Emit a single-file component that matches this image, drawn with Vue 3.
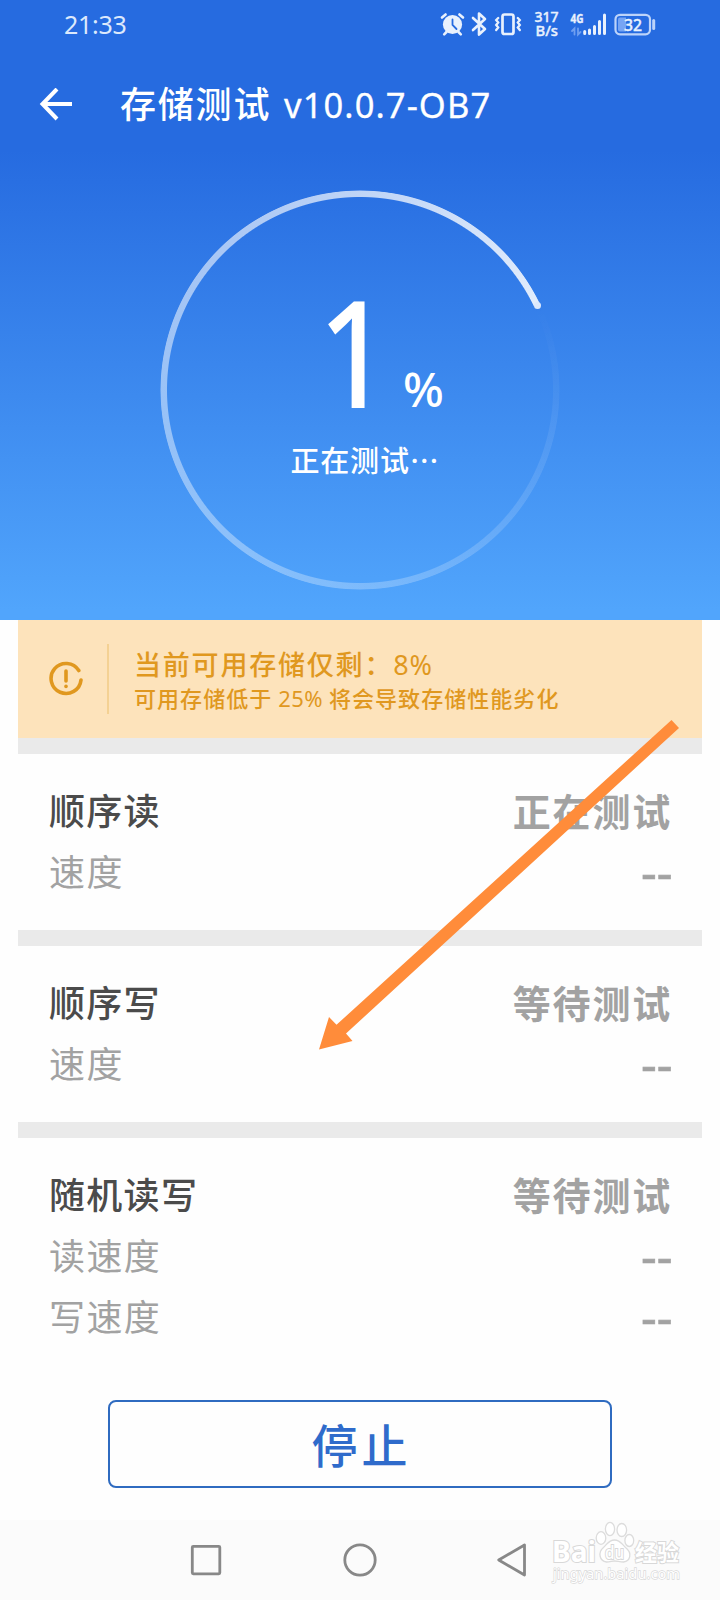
<script setup>
const sections = [
  { title: '顺序读', status: '正在测试', rows: ['速度'] },
  { title: '顺序写', status: '等待测试', rows: ['速度'] },
  { title: '随机读写', status: '等待测试', rows: ['读速度', '写速度'] },
]
</script>

<template>
  <div class="screen">
    <header class="hero">
      <div class="statusbar">
        <span class="time">21:33</span>
        <svg class="tray" width="224" height="50" viewBox="436 0 224 50">
          <g fill="none" stroke="#e9f1fd" stroke-width="2.4" stroke-linecap="round">
            <circle cx="452.5" cy="24.5" r="9.6" fill="#e9f1fd" stroke="none" />
            <path d="M442 17.5l3.6-3M463 17.5l-3.6-3M446.5 32l-2.3 2.4M458.5 32l2.3 2.4" stroke-width="2.6" />
            <path d="M452.5 19.5v5.5l4 4" stroke="#266be0" stroke-width="1.8" />
            <path d="M473 18l12 11-6 5.500v-21l6 5.500L473 30" stroke-width="2.6" stroke-linejoin="round" />
            <rect x="502.5" y="14.500" width="11" height="19.500" rx="2" stroke-width="2.700" />
            <path d="M498.200 18l-2 2 2 2.500-2 2.500 2 2.500-2 2.500M517.800 18l2 2-2 2.500 2 2.500-2 2.500 2 2.500" stroke-width="2.300" />
            <path d="M584.700 31.500v2M589.500 30v3.500M594.500 26.500v7M599.500 21.500v12M604.500 15v18.500" stroke-width="3" />
            <path d="M574.500 34.500v-6l-2.500 2.500M578 28.500v6l2.500-2.500" stroke="#6f9ff0" stroke-width="1.800" />
            <rect x="615.500" y="14.800" width="34.500" height="19.500" rx="4.500" stroke="#bcd3fa" stroke-width="2.200" />
            <path d="M653.700 20.500v8" stroke="#bcd3fa" stroke-width="3" />
          </g>
          <path d="M626 17.500h-6a2 2 0 0 0-2 2v10a2 2 0 0 0 2 2h6z" fill="#77a5f4" />
          <g fill="#e9f1fd" stroke="#e9f1fd" stroke-width=".4" font-weight="500">
            <text x="534.500" y="22" font-size="14.500" textLength="24" lengthAdjust="spacingAndGlyphs">317</text>
            <text x="535.500" y="36" font-size="14.500" textLength="22.500" lengthAdjust="spacingAndGlyphs">B/s</text>
            <text x="570.500" y="23" font-size="13" font-weight="700" textLength="13" lengthAdjust="spacingAndGlyphs">4G</text>
            <text x="624" y="30.500" font-size="16.500" textLength="18" lengthAdjust="spacingAndGlyphs">32</text>
          </g>
        </svg>
      </div>

      <div class="titlebar">
        <svg width="34" height="34" viewBox="0 0 34 34" fill="none" stroke="#fff" stroke-width="4">
          <path d="M18 1L3.500 16 18 31M3.500 16H33" />
        </svg>
        <h1><span class="name">存储测试</span><span class="ver">v10.0.7-OB7</span></h1>
      </div>

      <div class="dial">
        <div class="ring"></div>
        <i class="cap"></i>
        <div class="percent"><span class="num">1</span><span class="unit">%</span></div>
        <p>正在测试<span>⋯</span></p>
      </div>
    </header>

    <main>
      <section class="notice">
        <svg width="36" height="36" viewBox="0 0 36 36" fill="none" stroke="#e0981f" stroke-width="3.600" stroke-linecap="round">
          <path d="M30.800 9.500A15 15 0 1 0 33 19" />
          <path d="M18 10v10" />
          <path d="M18 25.200v.2" />
        </svg>
        <i class="rule"></i>
        <div class="msg">
          <strong>当前可用存储仅剩：<b>8%</b></strong>
          <span>可用存储低于<em>25%</em>将会导致存储性能劣化</span>
        </div>
      </section>

      <section v-for="s in sections" :key="s.title" class="test">
        <div class="head"><h2>{{ s.title }}</h2><span>{{ s.status }}</span></div>
        <div v-for="r in s.rows" :key="r" class="row"><span>{{ r }}</span><b>--</b></div>
      </section>
    </main>

    <button class="stop">停止</button>

    <nav>
      <svg width="720" height="80" viewBox="0 1520 720 80">
        <g fill="none" stroke="#888" stroke-width="2.800" stroke-linejoin="round">
          <rect x="192.300" y="1546.300" width="27.500" height="27.500" rx="1" />
          <circle cx="360" cy="1560" r="15.200" />
          <path d="M524.500 1545v30L498.700 1560z" />
        </g>
      </svg>
    </nav>

    <svg class="watermark" width="136" height="66" viewBox="548 1518 136 66">
      <g fill="#fff" stroke="#dcdcdc" stroke-width="1.300">
        <ellipse cx="601" cy="1538" rx="4.800" ry="6.300" />
        <ellipse cx="610" cy="1529" rx="4.600" ry="6.600" />
        <ellipse cx="621.800" cy="1530" rx="4.800" ry="6.500" />
        <ellipse cx="629.300" cy="1540.500" rx="4.400" ry="6" />
        <path d="M614.500 1540c-6 0-7 4-11 7.500-6 5-4 13.500 3 14.500 4 0 5-1 8-1s5 1 9 1c7-1 9-9 2-14.500-4-3.500-5-7.500-11-7.500z" />
      </g>
      <g fill="#fff" stroke="#d8d8d8" stroke-width="2" paint-order="stroke" font-weight="700">
        <text x="552" y="1562" font-size="28" textLength="44" lengthAdjust="spacingAndGlyphs">Bai</text>
        <text x="605" y="1558.500" font-size="18" font-weight="500" textLength="19" lengthAdjust="spacingAndGlyphs">du</text>
        <text x="635" y="1561" font-size="23" textLength="44" lengthAdjust="spacingAndGlyphs">经验</text>
        <text x="553" y="1579" font-size="15" font-weight="400" stroke-width="1.300" textLength="127" lengthAdjust="spacingAndGlyphs">jingyan.baidu.com</text>
      </g>
    </svg>

    <svg class="arrow" width="362" height="332" viewBox="318 719 362 332">
      <path d="M319 1049.500L329 1017l7.500 7.800L671.500 720l7.500 8L346 1033.500l6.500 7.500z" fill="#ff8c3a" />
    </svg>
  </div>
</template>

<style>
body { margin: 0; background: #fefefe; }
</style>

<style scoped>
.screen {
  position: relative; width: 720px; height: 1600px; overflow: hidden;
  display: flex; flex-direction: column; background: #fefefe;
  font-family: "Noto Sans", "Noto Sans CJK SC", sans-serif;
}
.screen * { box-sizing: border-box; }
h1, h2, p { margin: 0; font-weight: 400; }
i, em { font-style: normal; }
.hero {
  height: 620px; flex: none; color: #fff;
  background: linear-gradient(180deg, #266be0 0, #266be0 150px, #51a5fc 610px);
}
.statusbar { height: 50px; display: flex; justify-content: space-between; padding: 0 60px 0 64px; }
.time { font-size: 25px; line-height: 49px; color: #dce9fc; letter-spacing: -.3px; }
.titlebar { height: 110px; padding: 0 39px; display: flex; align-items: center; gap: 47px; }
h1 { display: flex; align-items: center; line-height: 50px; }
.name { font-size: 36px; letter-spacing: 1.8px; font-weight: 500; width: 164px; }
.ver { font-size: 34.5px; letter-spacing: 1.1px; white-space: nowrap; -webkit-text-stroke: .3px #fff; }
.dial {
  position: relative; width: 400px; height: 400px; margin: 30px auto 0;
  display: flex; flex-direction: column; align-items: center;
}
.ring {
  position: absolute; inset: 0; border-radius: 50%;
  background: conic-gradient(from 64.4deg, rgba(255,255,255,0), rgba(255,255,255,.06) 8%, rgba(255,255,255,.86) 100%);
  mask: radial-gradient(circle, transparent 192.5px, #000 193.5px, #000 199px, transparent 200px);
}
.cap { position: absolute; left: 373.5px; top: 111.5px; width: 7px; height: 7px; border-radius: 50%; background: #dbe8fc; }
.percent { width: 400px; height: 246px; padding-left: 158px; display: flex; align-items: flex-start; }
.num {
  font-size: 146px; line-height: 322px; height: 246px; width: 85px;
  transform: scaleX(.88); transform-origin: 0 0; -webkit-text-stroke: 2px #fff;
}
.unit { font-size: 48px; font-weight: 500; line-height: 398px; height: 246px; }
.dial p { font-size: 29px; font-weight: 500; line-height: 50px; letter-spacing: .8px; padding-left: 10px; }
main { padding: 0 18px; }
.notice { height: 118px; background: #fde3bb; color: #e0981f; display: flex; align-items: center; padding-left: 30px; }
.rule { width: 2px; height: 70px; background: #f4d193; margin: 0 25px 0 23px; }
.msg { display: flex; flex-direction: column; white-space: nowrap; padding-top: 3px; }
.msg strong { font-size: 27px; line-height: 35px; font-weight: 500; letter-spacing: 1.8px; display: flex; }
.msg b { font-weight: 400; letter-spacing: .8px; }
.msg > span { font-size: 22px; line-height: 33px; font-weight: 500; letter-spacing: 1.05px; }
.msg em { margin: 0 6px; font-weight: 400; letter-spacing: .4px; }
.test { border-top: 16px solid #eaeaea; height: 192px; padding: 25px 31px 0; }
.head, .row { display: flex; justify-content: space-between; align-items: center; height: 61px; }
h2 { font-size: 36px; color: #4b4b4b; font-weight: 500; letter-spacing: 1.3px; }
.head span { font-size: 38px; font-weight: 700; color: #a2a2a2; letter-spacing: 1.8px; margin-right: -1px; }
.row { color: #a2a2a2; font-size: 36px; letter-spacing: 1.4px; }
.row b {
  font-size: 49px; line-height: 60px; font-weight: 400; letter-spacing: 0; margin-right: -1.5px;
  -webkit-text-stroke: .6px #a2a2a2;
}
.stop {
  position: absolute; left: 108px; top: 1400px; width: 504px; height: 88px;
  border: 2px solid #2f6bc0; border-radius: 8px; background: #fefefe; color: #2f6bcb;
  font: 500 46px/80px "Noto Sans CJK SC", sans-serif; letter-spacing: 4px; padding: 0 0 3px 3px;
}
nav { position: absolute; left: 0; top: 1520px; width: 720px; height: 80px; background: #fbfbfb; }
.watermark { position: absolute; left: 548px; top: 1518px; }
.arrow { position: absolute; left: 318px; top: 719px; }
</style>
